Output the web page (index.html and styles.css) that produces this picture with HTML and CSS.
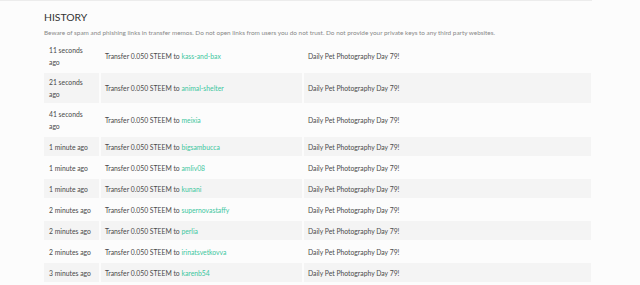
FILE: index.html
```html
<!DOCTYPE html>
<html>
<head>
<meta charset="utf-8">
<link rel="stylesheet" href="styles.css">
</head>
<body>
<div class="topline"></div>
<section class="history">
  <h2 class="title">HISTORY</h2>
  <p class="warning">Beware of spam and phishing links in transfer memos. Do not open links from users you do not trust. Do not provide your private keys to any third party websites.</p>
  <div class="table">
    <div class="row"><div class="cell time">11 seconds ago</div><div class="cell">Transfer 0.050 STEEM to&nbsp;<a class="user">kass-and-bax</a></div><div class="cell">Daily Pet Photography Day 79!</div></div>
    <div class="row"><div class="cell time">21 seconds ago</div><div class="cell">Transfer 0.050 STEEM to&nbsp;<a class="user">animal-shelter</a></div><div class="cell">Daily Pet Photography Day 79!</div></div>
    <div class="row"><div class="cell time">41 seconds ago</div><div class="cell">Transfer 0.050 STEEM to&nbsp;<a class="user">meixia</a></div><div class="cell">Daily Pet Photography Day 79!</div></div>
    <div class="row"><div class="cell time">1 minute ago</div><div class="cell">Transfer 0.050 STEEM to&nbsp;<a class="user">bigsambucca</a></div><div class="cell">Daily Pet Photography Day 79!</div></div>
    <div class="row"><div class="cell time">1 minute ago</div><div class="cell">Transfer 0.050 STEEM to&nbsp;<a class="user">amliv08</a></div><div class="cell">Daily Pet Photography Day 79!</div></div>
    <div class="row"><div class="cell time">1 minute ago</div><div class="cell">Transfer 0.050 STEEM to&nbsp;<a class="user">kunani</a></div><div class="cell">Daily Pet Photography Day 79!</div></div>
    <div class="row"><div class="cell time">2 minutes ago</div><div class="cell">Transfer 0.050 STEEM to&nbsp;<a class="user">supernovastaffy</a></div><div class="cell">Daily Pet Photography Day 79!</div></div>
    <div class="row"><div class="cell time">2 minutes ago</div><div class="cell">Transfer 0.050 STEEM to&nbsp;<a class="user">perlia</a></div><div class="cell">Daily Pet Photography Day 79!</div></div>
    <div class="row"><div class="cell time">2 minutes ago</div><div class="cell">Transfer 0.050 STEEM to&nbsp;<a class="user">irinatsvetkovva</a></div><div class="cell">Daily Pet Photography Day 79!</div></div>
    <div class="row"><div class="cell time">3 minutes ago</div><div class="cell">Transfer 0.050 STEEM to&nbsp;<a class="user">karenb54</a></div><div class="cell">Daily Pet Photography Day 79!</div></div>
  </div>
</section>
</body>
</html>
```
FILE: styles.css
```css
html, body {
  margin: 0;
  padding: 0;
  background: #fcfcfc;
  font-family: Lato, "Liberation Sans", sans-serif;
  color: #4a4a4a;
}
.topline {
  width: 592px;
  height: 1px;
  background: #ececec;
}
.history {
  width: 547px;
  margin-left: 44px;
}
.title {
  margin: 10px 0 0;
  font-size: 10.4px;
  font-weight: 400;
  line-height: 12px;
  color: #333;
}
.warning {
  margin: 6px 0 0;
  font-size: 6.4px;
  line-height: 8px;
  color: #888;
}
.table {
  margin-top: 4px;
  display: flex;
  flex-direction: column;
  gap: 2px;
}
.row {
  display: grid;
  grid-template-columns: 55px 201px 287px;
  column-gap: 2px;
  min-height: 19px;
}
.row:nth-child(even) .cell {
  background: #f4f4f4;
}
.cell {
  padding: 3px 4px;
  font-size: 6.8px;
  line-height: 12px;
  display: flex;
  align-items: center;
}
.cell.time {
  padding-left: 5px;
}
.user {
  color: #3ec79f;
}
```
